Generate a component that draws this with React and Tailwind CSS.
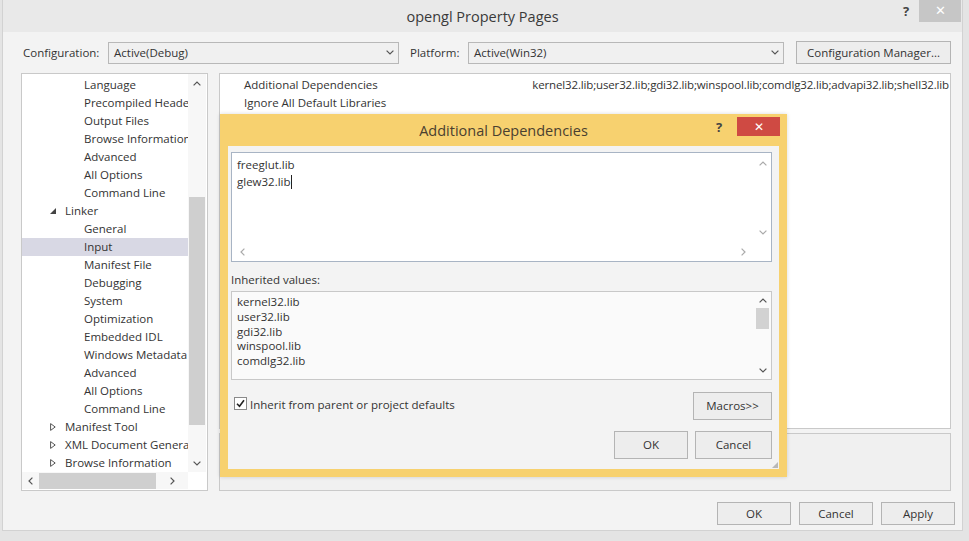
import React from "react";

const ChevDown = ({ className = "" }) => (
  <svg width="8" height="5" viewBox="0 0 8 5" className={className}>
    <path d="M0.6 0.6L4 4L7.4 0.6" fill="none" stroke="currentColor" strokeWidth="1.2" />
  </svg>
);
const ChevUp = ({ className = "" }) => (
  <svg width="8" height="5" viewBox="0 0 8 5" className={className}>
    <path d="M0.6 4.4L4 1L7.4 4.4" fill="none" stroke="currentColor" strokeWidth="1.2" />
  </svg>
);
const ChevLeft = ({ className = "" }) => (
  <svg width="5" height="8" viewBox="0 0 5 8" className={className}>
    <path d="M4.4 0.6L1 4L4.4 7.4" fill="none" stroke="currentColor" strokeWidth="1.2" />
  </svg>
);
const ChevRight = ({ className = "" }) => (
  <svg width="5" height="8" viewBox="0 0 5 8" className={className}>
    <path d="M0.6 0.6L4 4L0.6 7.4" fill="none" stroke="currentColor" strokeWidth="1.2" />
  </svg>
);

const tree = [
  { t: "Language", l: 2 },
  { t: "Precompiled Headers", l: 2 },
  { t: "Output Files", l: 2 },
  { t: "Browse Information", l: 2 },
  { t: "Advanced", l: 2 },
  { t: "All Options", l: 2 },
  { t: "Command Line", l: 2 },
  { t: "Linker", l: 1, open: true },
  { t: "General", l: 2 },
  { t: "Input", l: 2, sel: true },
  { t: "Manifest File", l: 2 },
  { t: "Debugging", l: 2 },
  { t: "System", l: 2 },
  { t: "Optimization", l: 2 },
  { t: "Embedded IDL", l: 2 },
  { t: "Windows Metadata", l: 2 },
  { t: "Advanced", l: 2 },
  { t: "All Options", l: 2 },
  { t: "Command Line", l: 2 },
  { t: "Manifest Tool", l: 1 },
  { t: "XML Document Generator", l: 1 },
  { t: "Browse Information", l: 1 },
];

function Btn({ children, className = "" }) {
  return (
    <div
      className={
        "flex items-center justify-center border border-[#b4b4b4] bg-[#ededed] text-[11.5px] text-[#333] " +
        className
      }
    >
      {children}
    </div>
  );
}

export default function App() {
  return (
    <div className="relative w-[969px] h-[541px] overflow-hidden bg-[#e4e4e4] font-['Open_Sans',sans-serif] text-[#333]">
      {/* main window */}
      <div className="ml-[2px] w-[961px] h-[531px] bg-[#f3f3f3] border-x border-b border-[#d2d2d2] flex flex-col">
        {/* title bar */}
        <div className="relative h-[32px] bg-[#e9e9e9] flex items-center justify-center">
          <span className="text-[14.5px] text-[#3a3a3a] pt-[1px]">opengl Property Pages</span>
          <span className="absolute left-[900px] top-[2px] text-[13px] font-bold text-[#444]">?</span>
          <div className="absolute left-[916px] top-0 w-[42px] h-[22px] bg-[#c6c6c6] flex items-center justify-center text-white text-[13px]">
            ✕
          </div>
        </div>
        {/* configuration row */}
        <div className="mt-[9px] h-[23px] flex items-center pl-[20px] text-[11.5px]">
          <span className="w-[85px]">Configuration:</span>
          <div className="w-[291px] h-[22px] border border-[#b8b8b8] bg-[#f0f0f0] flex items-center pl-[5px] pr-[4px]">
            <span className="flex-1">Active(Debug)</span>
            <ChevDown className="text-[#555]" />
          </div>
          <span className="ml-[11px] w-[58px]">Platform:</span>
          <div className="w-[316px] h-[22px] border border-[#b8b8b8] bg-[#f0f0f0] flex items-center pl-[5px] pr-[4px]">
            <span className="flex-1">Active(Win32)</span>
            <ChevDown className="text-[#555]" />
          </div>
          <Btn className="ml-[12px] w-[155px] h-[23px]">Configuration Manager...</Btn>
        </div>
        {/* main area */}
        <div className="mt-[9px] flex pl-[18px] pr-[11px] h-[418px]">
          {/* tree */}
          <div className="w-[187px] h-[418px] border border-[#c9c9c9] bg-white flex flex-col">
            <div className="flex h-[398px]">
              <div className="w-[166px] overflow-hidden pt-[2px] text-[11.5px]">
                {tree.map((it, i) => (
                  <div
                    key={i}
                    className={
                      "h-[18px] flex items-center whitespace-nowrap " +
                      (it.sel ? "bg-[#d8d8e4]" : "")
                    }
                  >
                    {it.l === 1 ? (
                      <>
                        <span className="shrink-0 w-[34px] flex justify-end">
                          {it.open ? (
                            <svg width="6" height="6" viewBox="0 0 6 6">
                              <path d="M6 0V6H0Z" fill="#444" />
                            </svg>
                          ) : (
                            <svg width="6" height="8" viewBox="0 0 6 8">
                              <path d="M0.6 0.6L5.2 4L0.6 7.4Z" fill="none" stroke="#555" strokeWidth="1" />
                            </svg>
                          )}
                        </span>
                        <span className="shrink-0 pl-[9px]">{it.t}</span>
                      </>
                    ) : (
                      <span className="shrink-0 pl-[62px]">{it.t}</span>
                    )}
                  </div>
                ))}
              </div>
              <div className="w-[18px] bg-[#f7f7f7] flex flex-col items-center">
                <div className="h-[18px] flex items-center">
                  <ChevUp className="text-[#555]" />
                </div>
                <div className="mt-[105px] w-[16px] h-[228px] bg-[#cfcfcf]" />
                <div className="flex-1" />
                <div className="h-[18px] flex items-center">
                  <ChevDown className="text-[#555]" />
                </div>
              </div>
            </div>
            <div className="h-[17px] flex items-center bg-[#f7f7f7]">
              <div className="w-[17px] flex justify-center">
                <ChevLeft className="text-[#555]" />
              </div>
              <div className="w-[117px] h-[16px] bg-[#cfcfcf]" />
              <div className="w-[32px] flex justify-center">
                <ChevRight className="text-[#555]" />
              </div>
              <div className="flex-1 bg-white h-full" />
            </div>
          </div>
          {/* right column */}
          <div className="ml-[11px] flex-1 flex flex-col">
            <div className="h-[356px] border border-[#c9c9c9] bg-white pt-[2px] text-[11.5px]">
              <div className="h-[18px] flex items-center pl-[24px] pr-[1px]">
                <span className="flex-1 whitespace-nowrap">Additional Dependencies</span>
                <span className="whitespace-nowrap tracking-[-0.15px]">
                  kernel32.lib;user32.lib;gdi32.lib;winspool.lib;comdlg32.lib;advapi32.lib;shell32.lib
                </span>
              </div>
              <div className="h-[18px] flex items-center pl-[24px]">
                <span>Ignore All Default Libraries</span>
              </div>
            </div>
            <div className="mt-[4px] h-[58px] border border-[#c9c9c9] bg-[#f0f0f0]" />
          </div>
        </div>
        {/* bottom buttons */}
        <div className="mt-[11px] flex justify-end gap-[8px] pr-[7px]">
          <Btn className="w-[74px] h-[23px]">OK</Btn>
          <Btn className="w-[74px] h-[23px]">Cancel</Btn>
          <Btn className="w-[74px] h-[23px]">Apply</Btn>
        </div>
      </div>

      {/* modal dialog */}
      <div className="absolute left-[220px] top-[114px] w-[567px] h-[363px] bg-[#f7d16f] flex flex-col px-[8px] pb-[8px] shadow-[0_0_4px_rgba(0,0,0,0.15)]">
        <div className="relative h-[32px] flex items-center justify-center">
          <span className="text-[14.5px] text-[#4a4030] pt-[1px]">Additional Dependencies</span>
          <span className="absolute left-[488px] top-[4px] text-[13px] font-bold text-[#444]">?</span>
          <div className="absolute left-[509px] top-[3px] w-[43px] h-[19px] bg-[#cf4a43] flex items-center justify-center text-white text-[12px]">
            ✕
          </div>
        </div>
        <div className="relative flex-1 bg-[#f3f3f3] pl-[3px] pr-[7px] pt-[6px] flex flex-col text-[11.5px]">
          {/* textarea */}
          <div className="h-[110px] border border-[#a8b4c4] bg-white flex flex-col">
            <div className="flex flex-1">
              <div className="flex-1 pl-[5px] pt-[3px] leading-[17px]">
                <div>freeglut.lib</div>
                <div className="flex items-center">
                  glew32.lib<span className="inline-block w-[1px] h-[14px] bg-[#222]" />
                </div>
              </div>
              <div className="w-[17px] flex flex-col items-center justify-between py-[8px]">
                <ChevUp className="text-[#aaa]" />
                <ChevDown className="text-[#aaa]" />
              </div>
            </div>
            <div className="h-[18px] flex items-center justify-between pl-[8px] pr-[25px]">
              <ChevLeft className="text-[#aaa]" />
              <ChevRight className="text-[#aaa]" />
            </div>
          </div>
          <div className="mt-[10px] h-[16px] flex items-center">Inherited values:</div>
          <div className="mt-[3px] h-[89px] border border-[#c8c8c8] bg-[#fafafa] flex">
            <div className="flex-1 pl-[5px] pt-[3px] leading-[14.8px]">
              <div>kernel32.lib</div>
              <div>user32.lib</div>
              <div>gdi32.lib</div>
              <div>winspool.lib</div>
              <div>comdlg32.lib</div>
            </div>
            <div className="w-[17px] flex flex-col items-center py-[6px]">
              <ChevUp className="text-[#555]" />
              <div className="mt-[5px] w-[13px] h-[21px] bg-[#d2d2d2]" />
              <div className="flex-1" />
              <ChevDown className="text-[#555]" />
            </div>
          </div>
          <div className="mt-[12px] flex items-start">
            <div className="mt-[5px] ml-[3px] w-[13px] h-[13px] border border-[#8a8a8a] bg-white flex items-center justify-center">
              <svg width="9" height="9" viewBox="0 0 9 9">
                <path d="M1 4.8L3.5 7.3L8 1.2" fill="none" stroke="#222" strokeWidth="1.6" />
              </svg>
            </div>
            <span className="ml-[3px] mt-[4px]">Inherit from parent or project defaults</span>
            <div className="flex-1" />
            <Btn className="w-[79px] h-[28px]">Macros&gt;&gt;</Btn>
          </div>
          <div className="mt-[11px] flex justify-end gap-[7px]">
            <Btn className="w-[74px] h-[28px]">OK</Btn>
            <Btn className="w-[77px] h-[28px]">Cancel</Btn>
          </div>
          <svg className="absolute right-[1px] bottom-[1px]" width="6" height="6" viewBox="0 0 6 6">
            <path d="M6 0V6H0Z" fill="#b8b8b8" />
          </svg>
        </div>
      </div>
    </div>
  );
}
